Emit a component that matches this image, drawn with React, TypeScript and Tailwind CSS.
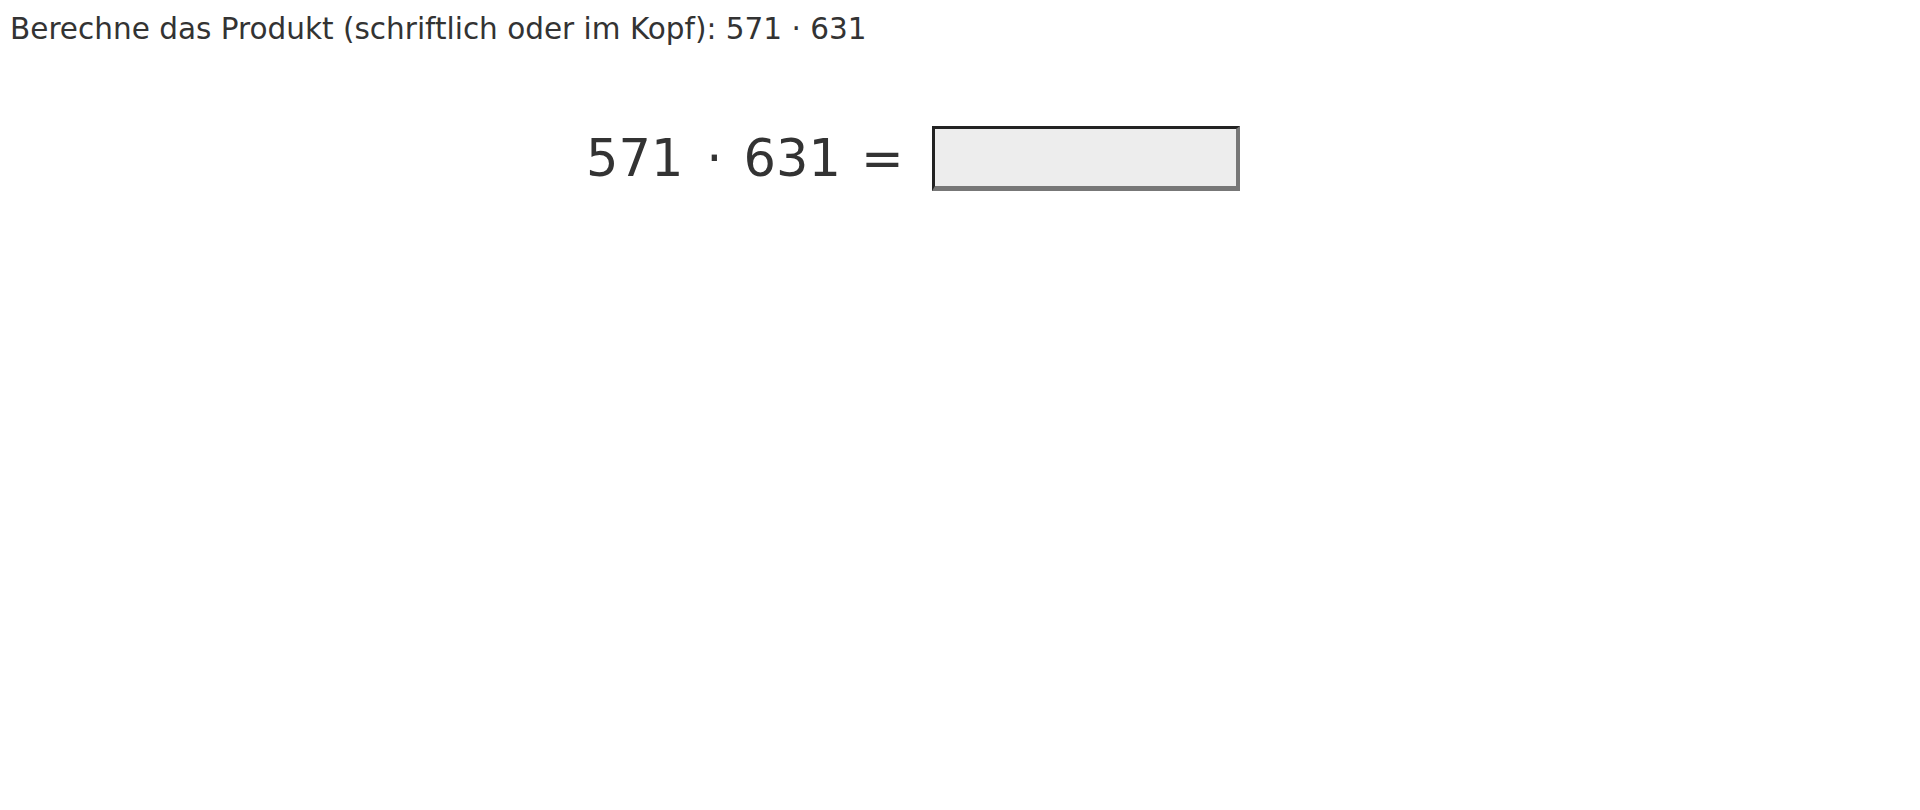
import React from 'react';

const App: React.FC = () => {
  const a = 571;
  const b = 631;

  return (
    <div className="min-h-[810px] w-full bg-white text-[#333] font-['DejaVu_Sans',sans-serif]">
      <p className="pl-[10px] pt-[12px] text-[29.5px] leading-[34px]">
        Berechne das Produkt (schriftlich oder im Kopf): {a} · {b}
      </p>
      <div className="mt-[80px] flex items-center pl-[586px] text-[51px] leading-none">
        <span>{a}</span>
        <span className="ml-[23px]">·</span>
        <span className="ml-[21px]">{b}</span>
        <span className="ml-[20px]">=</span>
        <input
          type="text"
          className="ml-[28px] h-[65px] w-[308px] border-t-[3px] border-l-[3px] border-r-4 border-b-[5px] border-t-[#222] border-l-[#222] border-r-[#777] border-b-[#777] bg-[#ededed] text-[40px] outline-none"
        />
      </div>
    </div>
  );
};

export default App;
